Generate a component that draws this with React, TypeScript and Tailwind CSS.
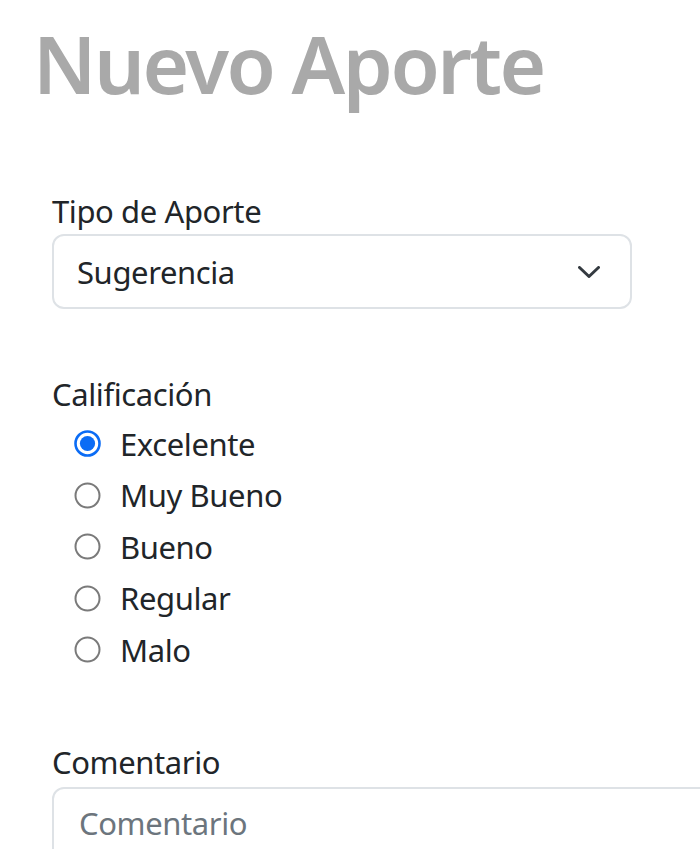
const opciones = ['Excelente', 'Muy Bueno', 'Bueno', 'Regular', 'Malo'];

function Radio({ checked }: { checked: boolean }) {
  return (
    <svg width="27" height="27" viewBox="0 0 27 27" className="shrink-0">
      {checked ? (
        <>
          <circle cx="13.5" cy="13.5" r="12" fill="white" stroke="#0b6cf5" strokeWidth="2.6" />
          <circle cx="13.5" cy="13.5" r="7.6" fill="#0b6cf5" />
        </>
      ) : (
        <circle cx="13.5" cy="13.5" r="12" fill="white" stroke="#7a7a7a" strokeWidth="2" />
      )}
    </svg>
  );
}

export default function App() {
  return (
    <div className="h-screen overflow-hidden bg-white font-['Noto_Sans',sans-serif] text-[#212529]">
      <h1 className="ml-[33px] mt-[15px] text-[80px] font-semibold leading-[96px] tracking-[-2.5px] text-[#a9a9a9]">
        Nuevo Aporte
      </h1>

      <form className="pl-[52px]">
        <label className="mt-[77px] block text-[31px] leading-[46px] tracking-[-0.4px]">Tipo de Aporte</label>
        <div className="flex h-[75px] w-[580px] items-center justify-between rounded-[12px] border-2 border-[#dee2e6] pl-[23px] pr-[30px]">
          <span className="text-[31px] leading-[46px] tracking-[-0.4px]">Sugerencia</span>
          <svg width="22" height="12" viewBox="0 0 22 12" fill="none">
            <path d="M1.5 1.5 11 10.5 20.5 1.5" stroke="#343a40" strokeWidth="3" strokeLinecap="round" strokeLinejoin="round" />
          </svg>
        </div>

        <label className="mt-[62px] block text-[31px] leading-[46px] tracking-[-0.4px]">Calificación</label>
        <div className="mt-px flex flex-col">
          {opciones.map((op, i) => (
            <div key={op} className="flex h-[51.5px] items-center pl-[22px]">
              <Radio checked={i === 0} />
              <span className="ml-[19px] text-[31px] leading-[46px] tracking-[-0.4px]">{op}</span>
            </div>
          ))}
        </div>

        <label className="mt-[63px] block text-[31px] leading-[46px] tracking-[-0.4px]">Comentario</label>
        <textarea
          readOnly
          placeholder="Comentario"
          className="mt-[2px] block h-[150px] w-[700px] resize-none rounded-tl-[12px] border-2 border-[#dee2e6] px-[25px] pt-[11px] text-[31px] leading-[46px] tracking-[-0.4px] outline-none placeholder:text-[#6c757d]"
        />
      </form>
    </div>
  );
}
